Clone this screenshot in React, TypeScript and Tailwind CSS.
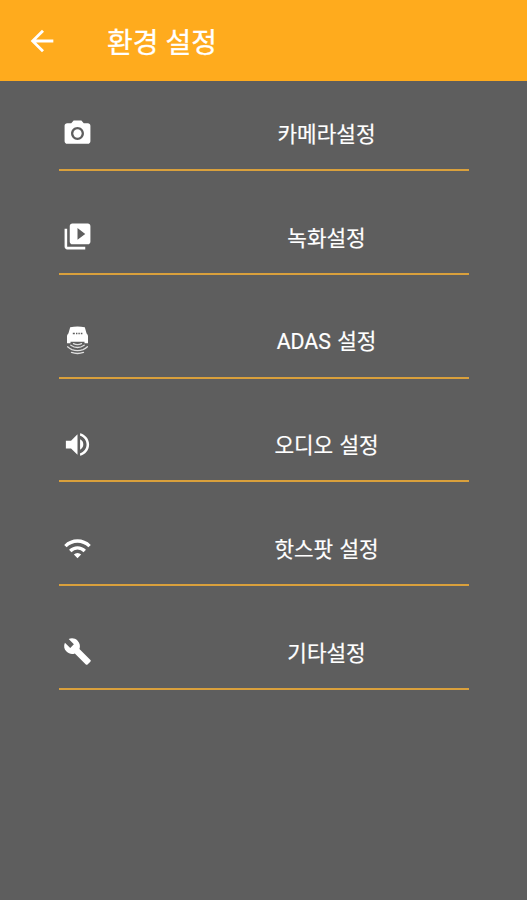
import type {ComponentType} from 'react';
import {MdArrowBack, MdBuild, MdPhotoCamera, MdVideoLibrary, MdVolumeUp, MdWifi} from 'react-icons/md';

interface IconProps {
  className?: string;
}

interface SettingItem {
  key: string;
  label: string;
  icon: ComponentType<IconProps>;
  iconSize: string;
}

// Car seen from above with sensor waves behind it
function AdasIcon({className}: IconProps) {
  return (
    <svg viewBox="0 0 31 31" fill="none" className={className}>
      <path
        d="M8.2 2.2Q15.5.6 22.8 2.2L24.6 8.5Q26 9.5 26 11V18.2H22.5V16.8H8.5V18.2H5V11Q5 9.5 6.4 8.5Z"
        fill="currentColor"
      />
      <path d="M10.8 8.6h2M14 8.6h1.4M16.4 8.6h1.4M18.8 8.6h1.6" stroke="#5e5e5e" strokeWidth="1.5" />
      <g stroke="currentColor" strokeWidth="1.3" strokeLinecap="round" opacity="0.8">
        <path d="M11.5 18.6Q15.5 20.6 19.5 18.6" />
        <path d="M8.8 20.2Q15.5 24.8 22.2 20.2" />
        <path d="M5.6 21.8Q8 23.8 10 24.6Q15.5 26.6 21 24.6Q23.5 23.6 25.4 21.8" />
        <path d="M9.5 27.4Q15.5 29.6 21.5 27.4" />
      </g>
    </svg>
  );
}

const SETTINGS: SettingItem[] = [
  {key: 'camera', label: '카메라설정', icon: MdPhotoCamera, iconSize: 'h-[31px] w-[31px]'},
  {key: 'record', label: '녹화설정', icon: MdVideoLibrary, iconSize: 'h-[31px] w-[31px]'},
  {key: 'adas', label: 'ADAS 설정', icon: AdasIcon, iconSize: 'h-[31px] w-[31px]'},
  {key: 'audio', label: '오디오 설정', icon: MdVolumeUp, iconSize: 'h-[31px] w-[31px]'},
  {key: 'hotspot', label: '핫스팟 설정', icon: MdWifi, iconSize: 'h-[29px] w-[29px]'},
  {key: 'etc', label: '기타설정', icon: MdBuild, iconSize: 'h-[29px] w-[29px]'}
];

export default function App() {
  return (
    <div className="flex h-screen w-full flex-col overflow-hidden bg-[#5e5e5e] font-['Roboto','Noto_Sans_CJK_KR',sans-serif] text-white">
      <header className="flex h-[81px] shrink-0 items-center bg-[#ffab1d] pl-[25px]">
        <button type="button" aria-label="뒤로">
          <MdArrowBack className="h-[34px] w-[34px]" />
        </button>
        <h1 className="ml-[48px] pt-[6px] text-[28px] leading-none [-webkit-text-stroke:0.3px_white]">환경 설정</h1>
      </header>

      <main className="flex flex-col gap-[27.8px] pt-[14px] pr-[58px] pl-[59px]">
        {SETTINGS.map(({key, label, icon: Icon, iconSize}) => (
          <button
            key={key}
            type="button"
            className="flex h-[76px] items-center border-b-2 border-[#d9a03c] pt-[2px]"
          >
            <span className="flex w-[37px] shrink-0 justify-center">
              <Icon className={iconSize} />
            </span>
            <span className="ml-[88px] flex-1 pt-[3px] text-center text-[21.3px] leading-none [word-spacing:1px] [-webkit-text-stroke:0.2px_white]">
              {label}
            </span>
          </button>
        ))}
      </main>
    </div>
  );
}
